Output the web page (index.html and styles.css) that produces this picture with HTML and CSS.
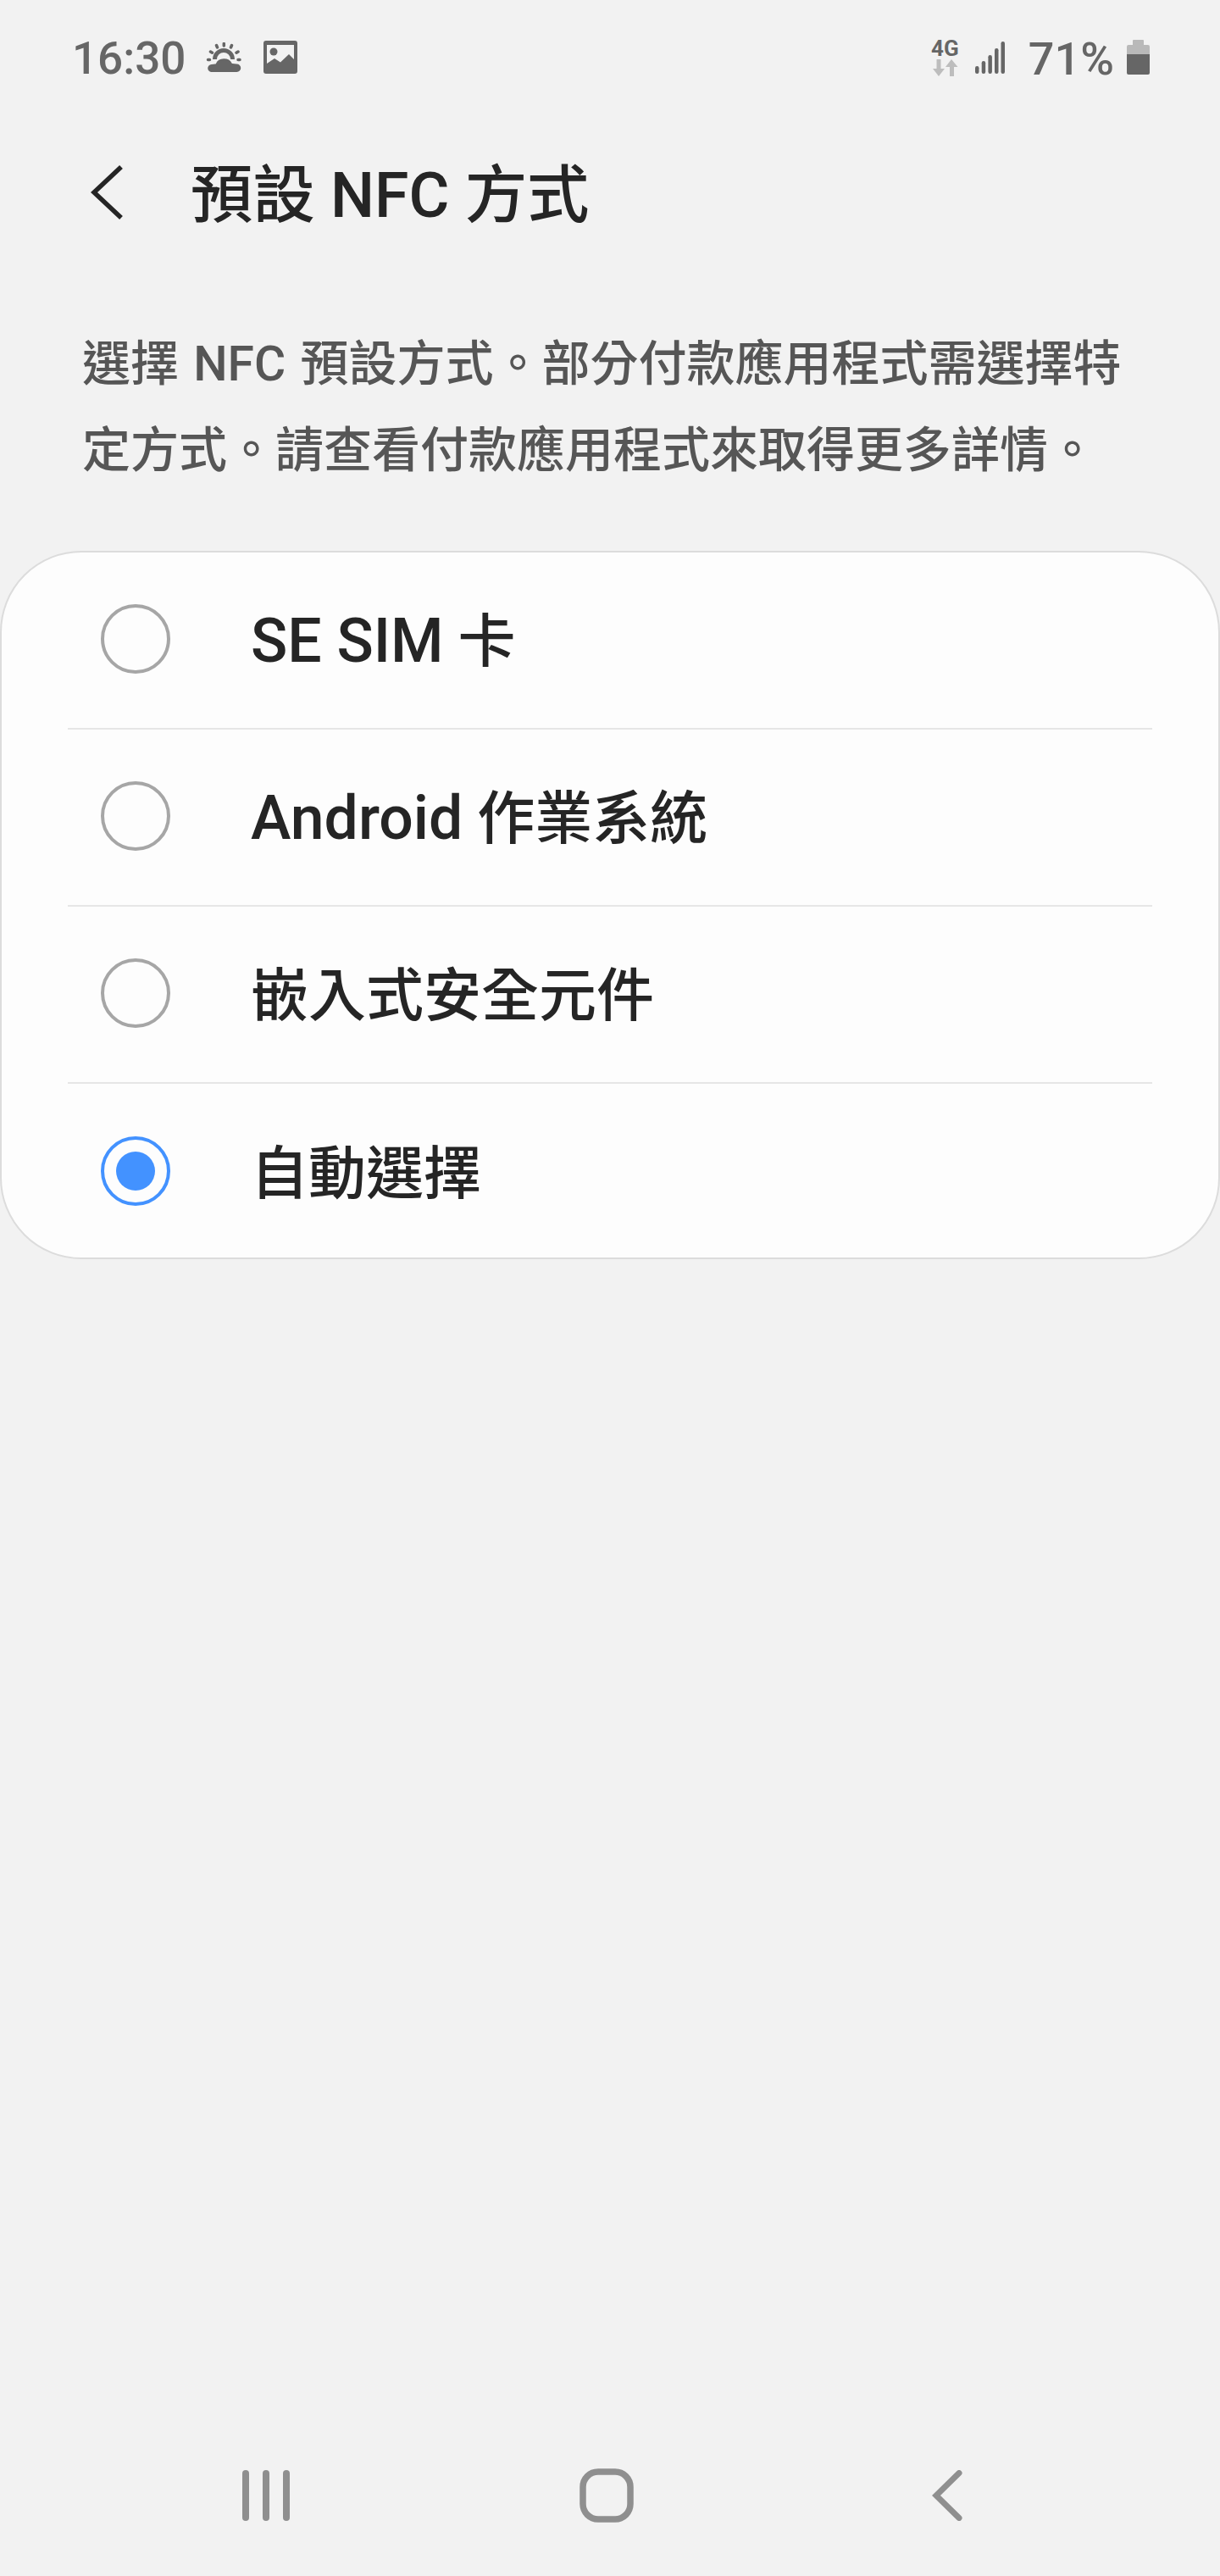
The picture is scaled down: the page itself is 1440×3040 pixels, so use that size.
FILE: index.html
```html
<!DOCTYPE html>
<html lang="zh-Hant">
<head>
    <meta charset="UTF-8">
    <meta name="viewport" content="width=device-width, initial-scale=1.0">
    <title>預設 NFC 方式</title>
    <link rel="stylesheet" href="styles.css">
</head>
<body>
    <div class="status-bar">
        <div class="status-left">
            <span class="status-time">16:30</span>
            <svg class="icon-weather" viewBox="0 0 44 36">
                <g fill="none" stroke="#666" stroke-width="3.500" stroke-linecap="round">
                    <path d="M21.300 1.500v2.500M12.500 3.500l1 2.500M30.500 3.500l-1 2.500M5.500 11l2 1.200M38 11l-2 1.200M2.500 20.500h2M38 20.500h2"/>
                    <path stroke-width="5" stroke-linecap="butt" d="M10.500 20a10.500 10.500 0 0 1 21 0"/>
                </g>
                <path fill="#666" stroke="#f2f2f2" stroke-width="2" d="M7 36a5.500 5.500 0 0 1-.5-11c1.500-.5 3-.5 4.500-.5a11 9.500 0 0 1 20.500-.5c1.500 0 3.500 0 5 .5a5.500 5.500 0 0 1 0 11.500z"/>
            </svg>
            <svg class="icon-image" viewBox="0 0 40 39">
                <path fill="#666" fill-rule="evenodd" d="M3 0h34a3 3 0 0 1 3 3v33a3 3 0 0 1-3 3H3a3 3 0 0 1-3-3V3a3 3 0 0 1 3-3zM4 5v22l9-6 7 4.500L30 16l6 6V5z"/>
                <circle cx="12" cy="13" r="4.500" fill="#666"/>
            </svg>
        </div>
        <div class="status-right">
            <div class="net-type">
                <span class="net-label">4G</span>
                <svg class="net-arrows" viewBox="0 0 31 20">
                    <path fill="#bdbdbd" d="M5.500 0h5v11h4.500L8 20 1 11h4.500zM23 0l7.500 9H26v11h-5V9h-5z"/>
                </svg>
            </div>
            <svg class="icon-signal" viewBox="0 0 35 38">
                <g fill="#666">
                    <rect x="0" y="29" width="4.500" height="9" rx="2.200"/>
                    <rect x="7.700" y="23" width="4.500" height="15" rx="2.200"/>
                    <rect x="15.400" y="16" width="4.500" height="22" rx="2.200"/>
                    <rect x="23" y="8" width="4.500" height="30" rx="2.200"/>
                    <rect x="30.500" y="0" width="4.500" height="38" rx="2.200"/>
                </g>
            </svg>
            <span class="status-battery-text">71%</span>
            <svg class="icon-battery" viewBox="0 0 27 41">
                <path fill="#b9b9b9" d="M7 1a1 1 0 0 1 1-1h11a1 1 0 0 1 1 1v5h5a2 2 0 0 1 2 2v9H0V8a2 2 0 0 1 2-2h5z"/>
                <path fill="#666" d="M0 17h27v22a2 2 0 0 1-2 2H2a2 2 0 0 1-2-2z"/>
            </svg>
        </div>
    </div>

    <div class="header">
        <svg class="back-icon" viewBox="0 0 38 64">
            <path d="M36 2 4 32l32 30" fill="none" stroke="#252525" stroke-width="5.500"/>
        </svg>
        <h1 class="title">預設 NFC 方式</h1>
    </div>

    <p class="description">選擇 NFC 預設方式。部分付款應用程式需選擇特定方式。請查看付款應用程式來取得更多詳情。</p>

    <div class="option-card">
        <div class="option">
            <span class="radio"></span>
            <span class="option-label"><span class="latin">SE SIM</span> 卡</span>
        </div>
        <div class="option">
            <span class="radio"></span>
            <span class="option-label"><span class="latin">Android</span> 作業系統</span>
        </div>
        <div class="option">
            <span class="radio"></span>
            <span class="option-label">嵌入式安全元件</span>
        </div>
        <div class="option">
            <span class="radio radio-on"></span>
            <span class="option-label">自動選擇</span>
        </div>
    </div>

    <div class="nav-bar">
        <svg class="nav-recent" viewBox="0 0 56 60">
            <g fill="#8f8f8f">
                <rect x="0" y="0" width="8" height="60" rx="4"/>
                <rect x="24" y="0" width="8" height="60" rx="4"/>
                <rect x="48" y="0" width="8" height="60" rx="4"/>
            </g>
        </svg>
        <svg class="nav-home" viewBox="0 0 64 64">
            <rect x="4" y="4" width="56" height="56" rx="18" fill="none" stroke="#8f8f8f" stroke-width="7.500"/>
        </svg>
        <svg class="nav-back" viewBox="0 0 36 60">
            <path d="M32 3.500 5 30l27 26.500" fill="none" stroke="#8f8f8f" stroke-width="7" stroke-linecap="round"/>
        </svg>
    </div>
</body>
</html>
```

FILE: styles.css
```css
body {
    font-family: Roboto, "Noto Sans CJK TC", sans-serif;
    background-color: #f2f2f2;
    margin: 0;
    padding: 0;
    width: 1440px;
    height: 3040px;
    display: flex;
    flex-direction: column;
    overflow: hidden;
}
.status-bar {
    height: 136px;
    padding: 47px 83px 0 85px;
    box-sizing: border-box;
    display: flex;
    justify-content: space-between;
    align-items: flex-start;
    flex-shrink: 0;
}
.status-left,
.status-right {
    display: flex;
    align-items: center;
    height: 41px;
}
.status-time {
    font-size: 53px;
    font-weight: 500;
    line-height: 41px;
    color: #666;
    width: 158px;
    margin-top: 4px;
}
.icon-weather {
    width: 44px;
    height: 36px;
    margin-right: 24px;
}
.icon-image {
    width: 40px;
    height: 39px;
}
.net-type {
    width: 31px;
    display: flex;
    flex-direction: column;
    align-items: center;
    margin-right: 20px;
}
.net-label {
    font-size: 26px;
    font-weight: 700;
    line-height: 22px;
    color: #666;
}
.net-arrows {
    width: 31px;
    height: 20px;
    margin-top: 2px;
}
.icon-signal {
    width: 35px;
    height: 38px;
    margin-right: 28px;
}
.status-battery-text {
    font-size: 54px;
    font-weight: 500;
    line-height: 41px;
    color: #666;
    margin: 4px 15px 0 0;
}
.icon-battery {
    width: 27px;
    height: 41px;
}
.header {
    height: 182px;
    padding-left: 107px;
    display: flex;
    align-items: center;
    flex-shrink: 0;
}
.back-icon {
    width: 38px;
    height: 64px;
    margin-right: 80px;
}
.title {
    margin: 0 0 6px;
    font-size: 73.4px;
    font-weight: 500;
    color: #252525;
}
.description {
    margin: 0;
    padding: 61px 97px 0;
    font-size: 57px;
    font-weight: 500;
    line-height: 102px;
    word-spacing: 3px;
    color: #565656;
    height: 332px;
    box-sizing: border-box;
    flex-shrink: 0;
}
.option-card {
    background-color: #fdfdfd;
    border: 2px solid #dcdcdc;
    border-radius: 96px;
    box-sizing: border-box;
    height: 836px;
    flex-shrink: 0;
}
.option {
    height: 209px;
    margin: 0 78px;
    padding: 0 0 3px 39px;
    box-sizing: border-box;
    display: flex;
    align-items: center;
    border-bottom: 2px solid #e6e6e6;
}
.option:last-child {
    border-bottom: none;
}
.radio {
    width: 82px;
    height: 82px;
    border: 4px solid #a6a6a6;
    border-radius: 50%;
    box-sizing: border-box;
    margin-right: 95px;
    display: flex;
    align-items: center;
    justify-content: center;
}
.radio-on {
    border-color: #4392ff;
}
.radio-on::after {
    content: "";
    width: 46px;
    height: 46px;
    border-radius: 50%;
    background-color: #4392ff;
}
.option-label {
    font-size: 68px;
    font-weight: 500;
    line-height: 90px;
    color: #252525;
    margin-top: 7px;
}
.latin {
    font-size: 71.5px;
}
.nav-bar {
    margin-top: auto;
    height: 65px;
    margin-bottom: 63px;
    padding-left: 286px;
    display: flex;
    align-items: center;
    flex-shrink: 0;
}
.nav-recent {
    width: 56px;
    height: 60px;
    margin-right: 342px;
}
.nav-home {
    width: 64px;
    height: 64px;
    margin-right: 352px;
}
.nav-back {
    width: 36px;
    height: 60px;
}
```
